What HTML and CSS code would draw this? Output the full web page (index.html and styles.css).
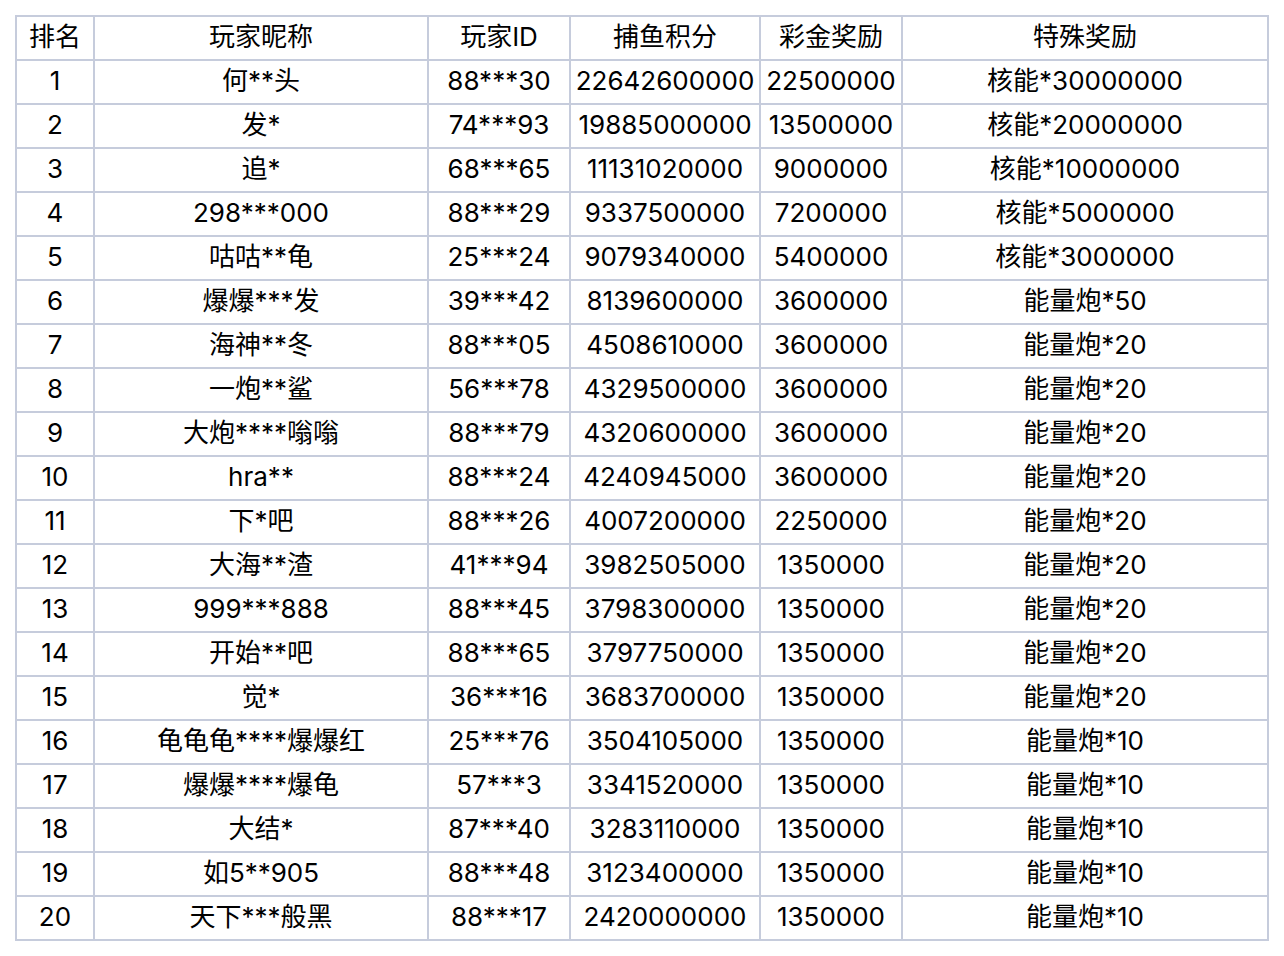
FILE: index.html
```html
<!DOCTYPE html>
<html lang="zh-CN">
<head>
<meta charset="utf-8">
<title>排名</title>
<link rel="stylesheet" href="styles.css">
</head>
<body>
<table class="rank">
<colgroup>
<col class="c-rank"><col class="c-name"><col class="c-id"><col class="c-score"><col class="c-prize"><col class="c-special">
</colgroup>
<thead>
<tr><th>排名</th><th>玩家昵称</th><th>玩家ID</th><th>捕鱼积分</th><th>彩金奖励</th><th>特殊奖励</th></tr>
</thead>
<tbody>
<tr><td>1</td><td>何**头</td><td>88***30</td><td>22642600000</td><td>22500000</td><td>核能*30000000</td></tr>
<tr><td>2</td><td>发*</td><td>74***93</td><td>19885000000</td><td>13500000</td><td>核能*20000000</td></tr>
<tr><td>3</td><td>追*</td><td>68***65</td><td>11131020000</td><td>9000000</td><td>核能*10000000</td></tr>
<tr><td>4</td><td>298***000</td><td>88***29</td><td>9337500000</td><td>7200000</td><td>核能*5000000</td></tr>
<tr><td>5</td><td>咕咕**龟</td><td>25***24</td><td>9079340000</td><td>5400000</td><td>核能*3000000</td></tr>
<tr><td>6</td><td>爆爆***发</td><td>39***42</td><td>8139600000</td><td>3600000</td><td>能量炮*50</td></tr>
<tr><td>7</td><td>海神**冬</td><td>88***05</td><td>4508610000</td><td>3600000</td><td>能量炮*20</td></tr>
<tr><td>8</td><td>一炮**鲨</td><td>56***78</td><td>4329500000</td><td>3600000</td><td>能量炮*20</td></tr>
<tr><td>9</td><td>大炮****嗡嗡</td><td>88***79</td><td>4320600000</td><td>3600000</td><td>能量炮*20</td></tr>
<tr><td>10</td><td>hra**</td><td>88***24</td><td>4240945000</td><td>3600000</td><td>能量炮*20</td></tr>
<tr><td>11</td><td>下*吧</td><td>88***26</td><td>4007200000</td><td>2250000</td><td>能量炮*20</td></tr>
<tr><td>12</td><td>大海**渣</td><td>41***94</td><td>3982505000</td><td>1350000</td><td>能量炮*20</td></tr>
<tr><td>13</td><td>999***888</td><td>88***45</td><td>3798300000</td><td>1350000</td><td>能量炮*20</td></tr>
<tr><td>14</td><td>开始**吧</td><td>88***65</td><td>3797750000</td><td>1350000</td><td>能量炮*20</td></tr>
<tr><td>15</td><td>觉*</td><td>36***16</td><td>3683700000</td><td>1350000</td><td>能量炮*20</td></tr>
<tr><td>16</td><td>龟龟龟****爆爆红</td><td>25***76</td><td>3504105000</td><td>1350000</td><td>能量炮*10</td></tr>
<tr><td>17</td><td>爆爆****爆龟</td><td>57***3</td><td>3341520000</td><td>1350000</td><td>能量炮*10</td></tr>
<tr><td>18</td><td>大结*</td><td>87***40</td><td>3283110000</td><td>1350000</td><td>能量炮*10</td></tr>
<tr><td>19</td><td>如5**905</td><td>88***48</td><td>3123400000</td><td>1350000</td><td>能量炮*10</td></tr>
<tr><td>20</td><td>天下***般黑</td><td>88***17</td><td>2420000000</td><td>1350000</td><td>能量炮*10</td></tr>
</tbody>
</table>
</body>
</html>
```
FILE: styles.css
```css
html, body {
  margin: 0;
  padding: 0;
  background: #ffffff;
}
body {
  padding: 15px 0 0 15px;
  font-family: Inter, "Noto Sans CJK SC", sans-serif;
  color: #000000;
}
.rank {
  border-collapse: separate;
  border-spacing: 0;
  table-layout: fixed;
  width: 1254px;
  border-top: 2px solid #c6ccdc;
  border-left: 2px solid #c6ccdc;
}
.rank th,
.rank td {
  border-right: 2px solid #c6ccdc;
  border-bottom: 2px solid #c6ccdc;
  height: 42px;
  padding: 0 0 2px 0;
  box-sizing: border-box;
  text-align: center;
  vertical-align: middle;
  font-size: 26px;
  font-weight: normal;
  line-height: 40px;
  white-space: nowrap;
  overflow: hidden;
}
.c-rank { width: 78px; }
.c-name { width: 334px; }
.c-id { width: 142px; }
.c-score { width: 190px; }
.c-prize { width: 142px; }
.c-special { width: 366px; }
```
